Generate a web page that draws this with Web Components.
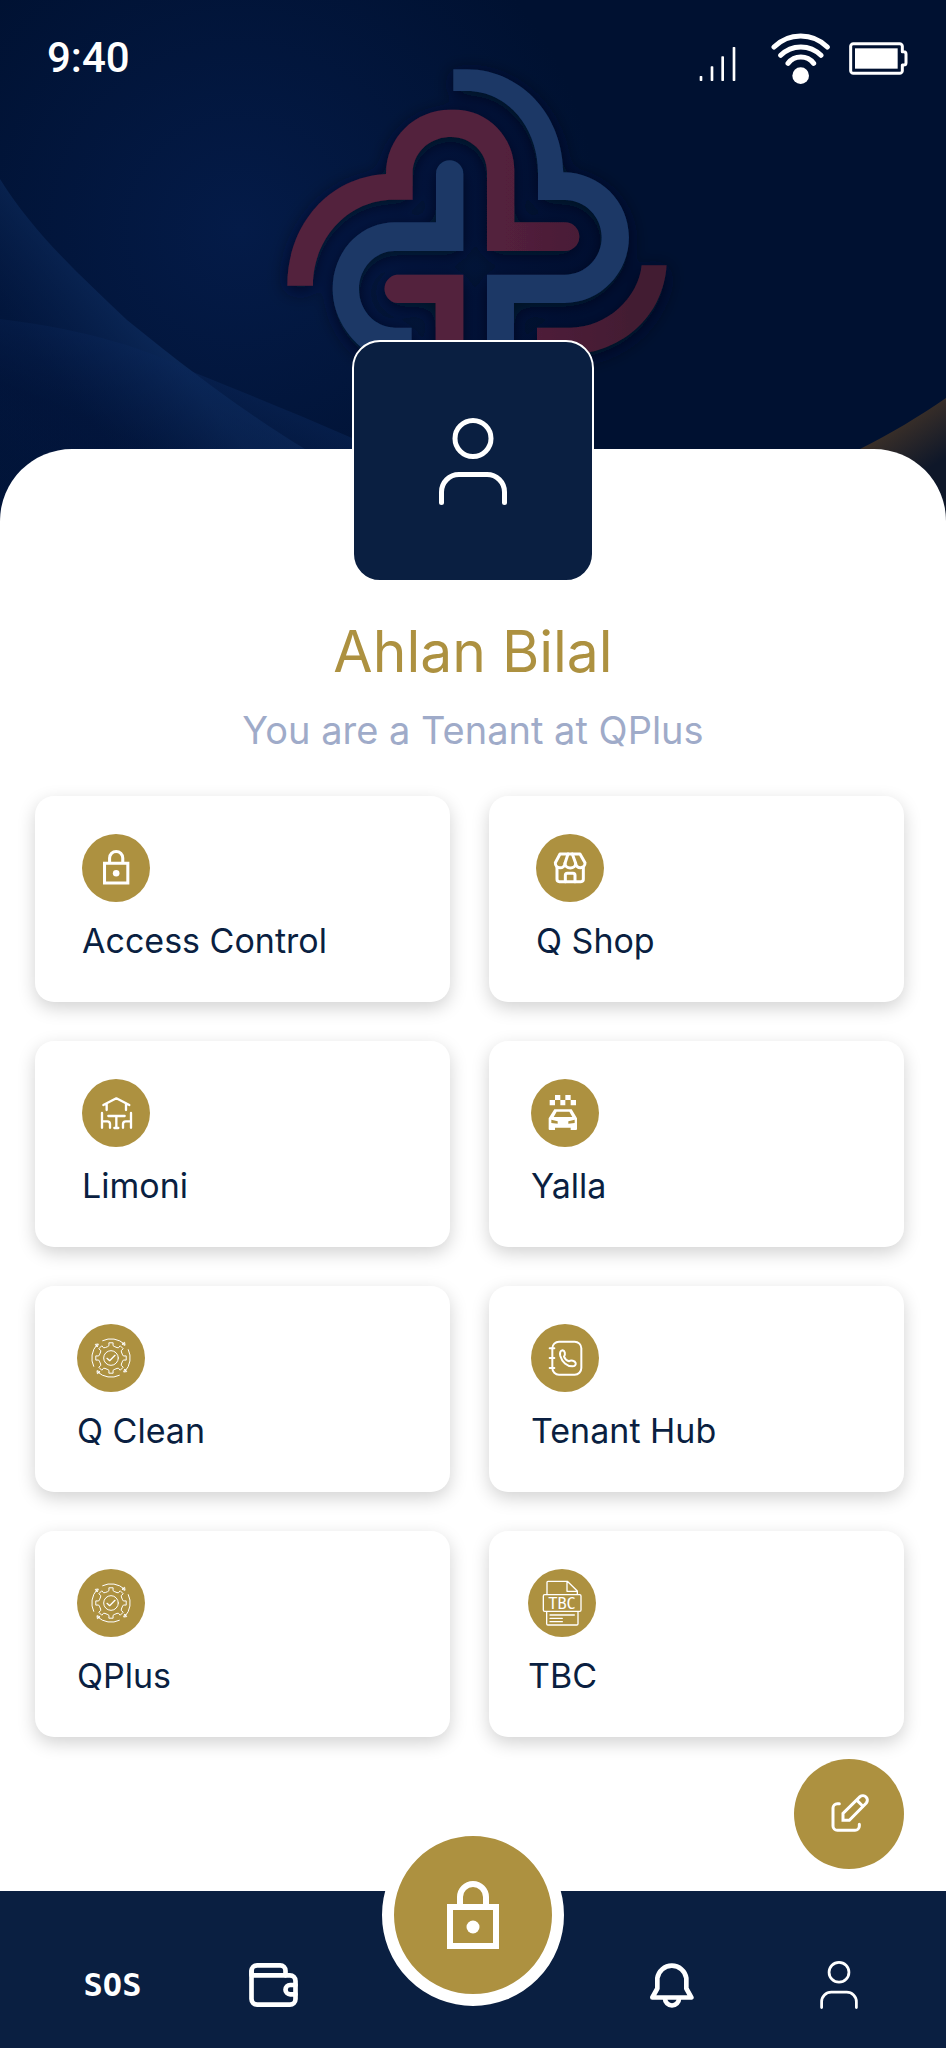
<!DOCTYPE html>
<html lang="en">
<head>
<meta charset="utf-8">
<meta name="viewport" content="width=device-width, initial-scale=1">
<title>QPlus Tenant</title>
<style>
    body {
        margin: 0;
        background: #fff;
        color: #0a1f41;
        font-family: Inter, "Liberation Sans", sans-serif;
        --navy: #0a1f41;
        --gold: #ad9140;
    }
</style>
</head>
<body>
<tenant-home>
    <status-bar slot="status">9:40</status-bar>
    <span slot="name">Ahlan Bilal</span>
    <span slot="role">You are a Tenant at QPlus</span>

    <service-card icon="lock" inset="wide">Access Control</service-card>
    <service-card icon="shop" inset="wide">Q Shop</service-card>
    <service-card icon="terrace" inset="wide">Limoni</service-card>
    <service-card icon="taxi">Yalla</service-card>
    <service-card icon="gear">Q Clean</service-card>
    <service-card icon="contacts">Tenant Hub</service-card>
    <service-card icon="gear">QPlus</service-card>
    <service-card icon="tbc" inset="narrow">TBC</service-card>

    <nav-bar slot="nav"></nav-bar>
</tenant-home>

<script>
// outline of the eight-tooth gear, centred on cx, cy
function gearPath(cx, cy, outer, inner) {
    let points = [];
    for (let i = 0; i < 8; i++) {
        let a = i * 45 - 90;
        [[-15, inner], [-9, inner + 2], [-8, outer], [8, outer], [9, inner + 2], [15, inner]].forEach(([d, r]) => {
            let rad = (a + d) * Math.PI / 180;
            points.push((cx + r * Math.cos(rad)).toFixed(1) + ' ' + (cy + r * Math.sin(rad)).toFixed(1));
        });
    }
    return 'M' + points.join('L') + 'Z';
}

const arrow = '<path d="M77 50A58 58 0 0 1 142 60M136 61L144 64L143 56Z"/>';

const lock = `
    <path d="M13 25V16a13 13 0 0 1 26 0V25M3 26H49V65H3Z" stroke-width="6"/>
    <circle cx="26" cy="46" r="6.5" fill="#fff" stroke="none"/>`;

const icons = {
    user: ['0 0 68 87', `<g stroke-width="5"><circle cx="34" cy="20.5" r="18"/>
        <path d="M2.5 84.5V74A17.5 17.5 0 0 1 20 56.5H48A17.5 17.5 0 0 1 65.5 74V84.5"/></g>`],

    padlock: ['0 0 52 68', `<g stroke-linecap="butt" stroke-linejoin="miter">${lock}</g>`],

    lock: ['0 0 204 204', `<g transform="translate(63 48) scale(1.52)" stroke-linecap="butt" stroke-linejoin="miter">${lock}</g>`],

    shop: ['0 0 204 204', `<g stroke-width="9">
        <path d="M72 60H132L147 86A14 14 0 0 1 119 88A16 14 0 0 1 87 88A14 14 0 0 1 58 86Z"/>
        <path d="M96 60L87 88M109 60L119 88"/>
        <path d="M63 100V136a7 7 0 0 0 7 7H135a7 7 0 0 0 7-7V100"/>
        <path d="M88 143V124a6 6 0 0 1 6-6H111a6 6 0 0 1 6 6V143"/></g>`],

    terrace: ['0 0 204 204', `<g stroke-width="7">
        <path d="M64 78L103 58L142 78M74 76V93M132 76V93"/>
        <path d="M60 102V146M60 127H76a8 8 0 0 1 8 8V146"/>
        <path d="M147 102V146M147 127H131a8 8 0 0 0-8 8V146"/>
        <path d="M79 111H128M103 111V146M97 147H109"/></g>`],

    taxi: ['0 0 204 204', `<g fill="#fff" stroke="none">
        <path d="M72 48h16v15h-16zM103 48h16v15h-16zM56 63h16v16h-16zM88 63h15v16h-15zM119 63h16v16h-16z"/>
        <path fill-rule="evenodd" d="M70 91H122L138 118V150a3 3 0 0 1-3 3H119V146H72V153H56a3 3 0 0 1-3-3V118Z
            M77 98H115L124 114H68Z M61 122L80 127V134L61 132Z M131 122L112 127V134L131 132Z"/></g>`],

    gear: ['0 0 204 204', `<g stroke-width="3">
        <path d="${gearPath(102, 102, 46, 36)}"/>
        <circle cx="102" cy="102" r="22"/>
        <path d="M90 103L98 110L114 94" stroke-width="4"/>
        ${arrow}
        <g transform="rotate(90 102 102)">${arrow}</g>
        <g transform="rotate(180 102 102)">${arrow}</g>
        <g transform="rotate(270 102 102)">${arrow}</g></g>`],

    contacts: ['0 0 204 204', `<g stroke-width="6">
        <rect x="64" y="53" width="87" height="99" rx="20"/>
        <path d="M56 73H70M56 102H70M56 132H70"/>
        <path d="M95 79C87 79 86 88 88 96C93 114 108 127 124 127C132 127 135 122 134 117C132 111 120 107 114 112C107 110 101 104 99 98C104 91 102 80 95 79Z"/></g>`],

    tbc: ['0 0 204 204', `<g stroke-width="4">
        <path d="M57 76V40a3 3 0 0 1 3-3H118L148 66V76M117 38V67H147"/>
        <rect x="46" y="77" width="113" height="50" rx="4"/>
        <path d="M56 128V164a4 4 0 0 0 4 4H146a4 4 0 0 0 4-4V128"/>
        <path d="M66 138H139M66 148H103M66 158H103"/></g>
        <text x="102" y="119" text-anchor="middle" font-family="DejaVu Sans Mono, monospace" font-size="46" fill="#fff" stroke="none">TBC</text>`],

    edit: ['0 0 330 330', `<g stroke-width="9">
        <path d="M136 134H130a13 13 0 0 0-13 13V201a13 13 0 0 0 13 13H183a13 13 0 0 0 13-13V196"/>
        <path d="M147 184V163L198 113A13.5 13.5 0 0 1 217 132L166 184Z" stroke-linejoin="miter"/>
        <path d="M189 124L206 141"/></g>`],

    wallet: ['0 0 146 132', `<g stroke-width="14">
        <path d="M7 37V24a17 17 0 0 1 17-17H93a16 16 0 0 1 16 16V37"/>
        <path d="M7 37H122a17 17 0 0 1 17 17V108a17 17 0 0 1-17 17H24a17 17 0 0 1-17-17V24"/>
        <path d="M139 66H123a14 14 0 0 0 0 28H139"/></g>`],

    bell: ['0 0 132 140', `<g stroke-width="14">
        <path d="M22 82V51A44 44 0 0 1 109 51V82L124 109H7Z"/>
        <path d="M45 112a21 21 0 0 0 42 0"/></g>`],

    signal: ['0 0 159 138', `<g fill="#fff" stroke="none">
        <rect x="2" y="123" width="8" height="15" rx="2"/><rect x="35" y="94" width="8" height="44" rx="2"/>
        <rect x="67" y="64" width="8" height="74" rx="2"/><rect x="101" y="36" width="8" height="102" rx="2"/></g>`],

    wifi: ['0 0 177 153', `<g stroke-width="15">
        <path d="M9 42A113 113 0 0 1 169 42M29 67A85 85 0 0 1 150 67M51 91A49 49 0 0 1 128 91"/>
        <circle cx="89" cy="128" r="25" fill="#fff" stroke="none"/></g>`],

    battery: ['0 0 177 99', `
        <path stroke-width="9" d="M13 5H152a8 8 0 0 1 8 8V29h4a7 7 0 0 1 7 7V62a7 7 0 0 1-7 7h-4V86a8 8 0 0 1-8 8H13a8 8 0 0 1-8-8V13a8 8 0 0 1 8-8Z"/>
        <rect x="18" y="19" width="128" height="61" fill="#fff" stroke="none"/>`]
};

class AppIcon extends HTMLElement {
    constructor() {
        super();
        this.shadow = this.attachShadow({ mode: 'open' });
    }

    connectedCallback() {
        let [viewBox, shapes] = icons[this.getAttribute('name')];

        this.shadow.innerHTML =
        `<style>
            :host { display: block; flex: none; }
            svg { display: block; width: 100%; height: 100%; }
        </style>
        <svg viewBox="${viewBox}" fill="none" stroke="#fff" stroke-linecap="round" stroke-linejoin="round" aria-hidden="true">${shapes}</svg>
        `;
    }
}
customElements.define('app-icon', AppIcon);

class StatusBar extends HTMLElement {
    constructor() {
        super();
        this.shadow = this.attachShadow({ mode: 'open' });
    }

    connectedCallback() {
        this.shadow.innerHTML =
        `<style>
            :host {
                display: flex;
                align-items: center;
                gap: 19px;
                height: 116px;
                padding: 0 38px 0 47px;
                color: #fff;
                font: 500 42px/48px Roboto, "Liberation Sans", sans-serif;
            }
            time { flex: 1; }
            .signal { width: 53px; height: 46px; }
            .wifi { width: 59px; height: 51px; }
            .battery { width: 59px; height: 33px; }
        </style>
        <time><slot></slot></time>
        <app-icon class="signal" name="signal"></app-icon>
        <app-icon class="wifi" name="wifi"></app-icon>
        <app-icon class="battery" name="battery"></app-icon>
        `;
    }
}
customElements.define('status-bar', StatusBar);

class HeroBanner extends HTMLElement {
    constructor() {
        super();
        this.shadow = this.attachShadow({ mode: 'open' });
    }

    connectedCallback() {
        this.shadow.innerHTML =
        `<style>
            :host {
                display: block;
                position: relative;
                height: 530px;
                background: #001131;
            }
            .art {
                position: absolute;
                inset: 0;
                width: 100%;
                height: 100%;
            }
            .content { position: relative; }
        </style>
        <svg class="art" viewBox="0 0 946 530" preserveAspectRatio="xMidYMin slice" aria-hidden="true">
            <defs>
                <radialGradient id="glow" gradientUnits="userSpaceOnUse" cx="240" cy="230" r="360">
                    <stop offset="0" stop-color="#041b48"/>
                    <stop offset="1" stop-color="#041b48" stop-opacity="0"/>
                </radialGradient>
                <linearGradient id="fold" gradientUnits="userSpaceOnUse" x1="165" y1="350" x2="85" y2="415">
                    <stop offset="0" stop-color="#0f2f62" stop-opacity=".65"/>
                    <stop offset="1" stop-color="#041a45" stop-opacity=".35"/>
                </linearGradient>
                <linearGradient id="wave" gradientUnits="userSpaceOnUse" x1="190" y1="370" x2="155" y2="450">
                    <stop offset="0" stop-color="#0a2658" stop-opacity=".5"/>
                    <stop offset="1" stop-color="#02143a" stop-opacity=".4"/>
                </linearGradient>
                <linearGradient id="amber" gradientUnits="userSpaceOnUse" x1="900" y1="422" x2="930" y2="468">
                    <stop offset="0" stop-color="#3a2f28"/>
                    <stop offset="1" stop-color="#0e1729"/>
                </linearGradient>
                <linearGradient id="red" gradientUnits="userSpaceOnUse" x1="700" y1="0" x2="1100" y2="0">
                    <stop offset="0" stop-color="#53203c"/>
                    <stop offset="1" stop-color="#421b32"/>
                </linearGradient>
                <filter id="shade" x="-20%" y="-20%" width="140%" height="140%">
                    <feDropShadow dx="0" dy="12" stdDeviation="28" flood-color="#000a24" flood-opacity=".8"/>
                </filter>
            </defs>
            <rect width="946" height="530" fill="url(#glow)"/>
            <path d="M0 179C35 235 80 275 127 320C170 355 240 410 305 449L400 530H0Z" fill="url(#fold)"/>
            <path d="M0 319C90 330 150 350 193 372C250 395 300 415 352 438L500 530H0Z" fill="url(#wave)"/>
            <path d="M946 398C920 416 890 434 860 449L850 530H946Z" fill="url(#amber)"/>
            <g transform="translate(270 50) scale(.3333)" filter="url(#shade)">
                <g fill="#1b3766">
                    <path d="M550 58H590C750 58 878 190 880 367C990 367 1077 455 1077 562C1077 670 990 759 885 759H732V930H651V674H885C945 674 995 625 995 562C995 500 945 450 885 450H804V367C804 235 715 123 590 123H550Z"/>
                    <path d="M498 372A41 41 0 0 1 580 372V603H375C315 603 267 655 267 718C267 780 315 833 375 833H425V930H330C250 890 188 810 188 718C188 605 270 517 375 517H498Z"/>
                </g>
                <g fill="url(#red)">
                    <path d="M52 707C52 530 170 382 348 372C348 262 435 179 540 179H555C655 179 733 262 733 360V517H885A43 43 0 0 1 885 603H651V365C651 305 600 261 545 261H535C475 265 428 310 428 370V449H370C235 449 129 565 129 707Z"/>
                    <path d="M380 674H580V930H497V759H380A43 43 0 0 1 380 674Z"/>
                    <path d="M1115 646H1190C1180 790 1070 905 900 915H801V833H900C1010 833 1105 745 1115 646Z"/>
                </g>
            </g>
        </svg>
        <div class="content"><slot></slot></div>
        `;
    }
}
customElements.define('hero-banner', HeroBanner);

class ServiceCard extends HTMLElement {
    constructor() {
        super();
        this.shadow = this.attachShadow({ mode: 'open' });
    }

    connectedCallback() {
        this.shadow.innerHTML =
        `<style>
            :host { display: grid; --inset: 42px; }
            :host([inset="wide"]) { --inset: 47px; }
            :host([inset="narrow"]) { --inset: 39px; }
            a {
                display: flex;
                flex-direction: column;
                gap: 16px;
                padding: 38px var(--inset);
                border-radius: 19px;
                background: #fff;
                box-shadow: 0 6px 18px rgba(0, 0, 0, .18);
                color: inherit;
                font-size: 34px;
                line-height: 46px;
                text-decoration: none;
            }
            app-icon {
                width: 68px;
                height: 68px;
                border-radius: 50%;
                background: var(--gold);
            }
        </style>
        <a href="#">
            <app-icon name="${this.getAttribute('icon')}"></app-icon>
            <span><slot></slot></span>
        </a>
        `;
    }
}
customElements.define('service-card', ServiceCard);

class NavBar extends HTMLElement {
    constructor() {
        super();
        this.shadow = this.attachShadow({ mode: 'open' });
    }

    connectedCallback() {
        this.shadow.innerHTML =
        `<style>
            :host {
                display: block;
                position: relative;
                background: var(--navy);
            }
            nav {
                display: grid;
                grid-template-columns: 1fr 182px 1fr;
                height: 157px;
            }
            .group {
                display: grid;
                grid-template-columns: 1fr 1fr;
                padding: 30px 24px 0;
            }
            .group:first-child { padding: 30px 28px 0 32px; }
            .group a {
                display: flex;
                align-items: center;
                justify-content: center;
                color: #fff;
                font: bold 32px/48px "DejaVu Sans Mono", monospace;
                text-decoration: none;
            }
            .wallet { width: 49px; height: 44px; }
            .bell { width: 44px; height: 47px; }
            .user { width: 38px; height: 48px; }
            button {
                display: flex;
                align-items: center;
                justify-content: center;
                box-sizing: border-box;
                width: 182px;
                height: 182px;
                margin: -67px 0 0;
                padding: 0;
                border: 12px solid #fff;
                border-radius: 50%;
                background: var(--gold);
            }
            .padlock { width: 52px; height: 68px; }
        </style>
        <nav aria-label="Main">
            <div class="group">
                <a href="#">SOS</a>
                <a href="#" aria-label="Wallet"><app-icon class="wallet" name="wallet"></app-icon></a>
            </div>
            <button type="button" aria-label="Unlock"><app-icon class="padlock" name="padlock"></app-icon></button>
            <div class="group">
                <a href="#" aria-label="Notifications"><app-icon class="bell" name="bell"></app-icon></a>
                <a href="#" aria-label="Profile"><app-icon class="user" name="user"></app-icon></a>
            </div>
        </nav>
        `;
    }
}
customElements.define('nav-bar', NavBar);

class TenantHome extends HTMLElement {
    constructor() {
        super();
        this.shadow = this.attachShadow({ mode: 'open' });
    }

    connectedCallback() {
        this.shadow.innerHTML =
        `<style>
            :host {
                display: flex;
                flex-direction: column;
                min-height: 100vh;
            }
            main {
                position: relative;
                display: flex;
                flex: 1;
                flex-direction: column;
                margin-top: -81px;
                border-radius: 72px 72px 0 0;
                background: #fff;
            }
            .avatar {
                display: flex;
                align-items: center;
                justify-content: center;
                align-self: center;
                width: 238px;
                height: 238px;
                margin-top: -109px;
                border: 2px solid #fff;
                border-radius: 28px;
                background: var(--navy);
            }
            .avatar app-icon { width: 68px; height: 87px; }
            h1, p { margin: 0; font-weight: 400; text-align: center; }
            h1 {
                margin-top: 34px;
                color: var(--gold);
                font-size: 57px;
                line-height: 72px;
            }
            p {
                margin-top: 18px;
                color: #9fabc9;
                font-size: 38px;
                line-height: 48px;
            }
            .services {
                display: grid;
                grid-template-columns: 1fr 1fr;
                gap: 39px;
                padding: 42px 42px 0 35px;
            }
            .edit {
                align-self: flex-end;
                width: 110px;
                height: 110px;
                margin: 22px 42px;
                padding: 0;
                border: 0;
                border-radius: 50%;
                background: var(--gold);
            }
        </style>
        <hero-banner><slot name="status"></slot></hero-banner>
        <main>
            <div class="avatar"><app-icon name="user"></app-icon></div>
            <h1><slot name="name"></slot></h1>
            <p><slot name="role"></slot></p>
            <div class="services"><slot></slot></div>
            <button class="edit" type="button" aria-label="Edit"><app-icon name="edit"></app-icon></button>
        </main>
        <slot name="nav"></slot>
        `;
    }
}
customElements.define('tenant-home', TenantHome);
</script>
</body>
</html>
